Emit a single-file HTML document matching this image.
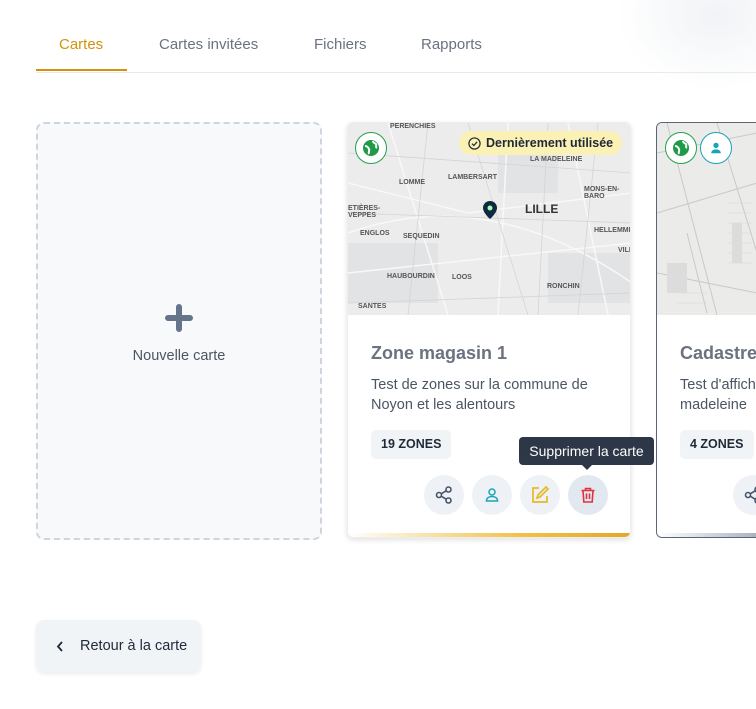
<!DOCTYPE html>
<html><head><meta charset="utf-8">
<style>
*{box-sizing:border-box;margin:0;padding:0}
html,body{width:756px;height:709px;overflow:hidden}
body{background:#fff;font-family:"Liberation Sans",sans-serif;position:relative}
.bg{position:absolute;right:-60px;top:-60px;width:200px;height:150px;background:radial-gradient(ellipse at center,#f1f3f6 0%,rgba(255,255,255,0) 70%)}
.tabs{position:absolute;left:36px;top:0;width:720px;height:73px;border-bottom:1px solid #e8eaee}
.tab{position:absolute;top:36px;font-size:15px;color:#6b7280}
.ul{position:absolute;left:0;top:69px;width:91px;height:2px;background:#d4920c}
.new{position:absolute;left:36px;top:122px;width:286px;height:418px;border:2px dashed #cfd5de;border-radius:8px;background:#f8f9fb}
.new .t{position:absolute;left:0;right:0;top:224px;text-align:center;font-size:14.5px;color:#4b5563}
.card{position:absolute;top:122px;height:416px;border-radius:6px;background:#fff;overflow:hidden}
.c1{left:347px;width:284px;box-shadow:0 2px 6px rgba(0,0,0,.12);border:1px solid #eee}
.c1:after{content:"";position:absolute;left:0;right:0;bottom:0;height:4px;background:linear-gradient(90deg,#fff,#f1c24a 60%,#e2a82a)}
.c2{left:656px;width:100px;border:1px solid #5b6475;border-right:0;border-radius:6px 0 0 6px}
.c2:after{content:"";position:absolute;left:0;right:0;bottom:0;height:4px;background:linear-gradient(90deg,#fff,#aab3c2)}
.map{position:absolute;left:0;top:0;right:0;height:192px;background:#ececec}
.title{position:absolute;left:23px;top:220px;font-size:18px;font-weight:bold;color:#6b7280}
.desc{position:absolute;left:23px;top:252px;width:245px;font-size:14.5px;line-height:20px;color:#4b5563;white-space:nowrap}
.badge{position:absolute;left:23px;top:307px;padding:0 10px;height:29px;line-height:29px;border-radius:5px;background:#f1f4f7;font-size:12.5px;font-weight:bold;color:#1f2937}
.btn{position:absolute;top:352px;width:40px;height:40px;border-radius:50%;background:#eef2f6;display:flex;align-items:center;justify-content:center}
.ic{position:absolute;top:9px;width:32px;height:32px;border-radius:50%;background:#fff;display:flex;align-items:center;justify-content:center}
.lbl{position:absolute;font-size:7px;color:#555;font-weight:bold}
.tip{position:absolute;left:519px;top:437px;width:135px;height:28px;background:#2d3748;color:#fff;font-size:14px;line-height:28px;text-align:center;border-radius:4px}
.tip:after{content:"";position:absolute;left:63px;bottom:-5px;border:5px solid transparent;border-bottom:0;border-top-color:#2d3748}
.back{position:absolute;left:36px;top:620px;width:165px;height:52px;border-radius:8px;background:#f1f4f7;box-shadow:0 2px 4px rgba(0,0,0,.08);font-size:14.5px;color:#1f2937}
</style></head><body>
<div class="bg"></div>
<div class="tabs">
<div class="tab" style="left:23px;color:#d4920c">Cartes</div>
<div class="tab" style="left:123px">Cartes invitées</div>
<div class="tab" style="left:278px">Fichiers</div>
<div class="tab" style="left:385px">Rapports</div>
<div class="ul"></div>
</div>
<div class="new">
<svg style="position:absolute;left:127px;top:180px" width="28" height="28" viewBox="0 0 28 28"><path d="M14 3v22M3 14h22" stroke="#64748b" stroke-width="6" stroke-linecap="round"/></svg>
<div class="t">Nouvelle carte</div>
</div>

<div class="card c1">
<div class="map">
<svg width="284" height="192" style="position:absolute;left:0;top:0">
<g fill="#e2e3e4"><rect x="0" y="120" width="90" height="60"/><rect x="150" y="20" width="60" height="50"/><rect x="200" y="130" width="84" height="50"/></g>
<g stroke="#f8f8f8" stroke-width="1.5" fill="none"><path d="M0 60 L120 90 L284 70"/><path d="M40 0 L100 192"/><path d="M160 0 L150 192"/><path d="M0 150 L284 120"/><path d="M220 0 L260 192"/><path d="M0 110 Q140 60 284 160"/></g>
<g stroke="#d2d4d6" stroke-width="0.8" fill="none"><path d="M0 30 L284 50"/><path d="M80 0 L60 192"/><path d="M200 0 L190 192"/><path d="M0 180 L284 170"/><path d="M120 0 L180 192"/><path d="M0 90 L284 100"/><path d="M250 0 L230 192"/></g>
<path d="M142 78a7 7 0 0 1 7 7c0 5-7 11-7 11s-7-6-7-11a7 7 0 0 1 7-7z" fill="#0f2a3d"/><circle cx="142" cy="85" r="2.5" fill="#9fb"/>
</svg>
<span class="lbl" style="left:42px;top:0">PERENCHIES</span>
<span class="lbl" style="left:182px;top:33px">LA MADELEINE</span>
<span class="lbl" style="left:51px;top:56px">LOMME</span>
<span class="lbl" style="left:100px;top:51px">LAMBERSART</span>
<span class="lbl" style="left:236px;top:63px">MONS-EN-BARO</span>
<span class="lbl" style="left:177px;top:79px;font-size:12px;color:#333">LILLE</span>
<span class="lbl" style="left:0;top:82px">ETIÈRES-<br>VEPPES</span>
<span class="lbl" style="left:12px;top:107px">ENGLOS</span>
<span class="lbl" style="left:55px;top:110px">SEQUEDIN</span>
<span class="lbl" style="left:246px;top:104px">HELLEMMES</span>
<span class="lbl" style="left:270px;top:124px">VILL</span>
<span class="lbl" style="left:39px;top:150px">HAUBOURDIN</span>
<span class="lbl" style="left:104px;top:151px">LOOS</span>
<span class="lbl" style="left:199px;top:160px">RONCHIN</span>
<span class="lbl" style="left:10px;top:180px">SANTES</span>
</div>
<div class="ic" style="left:7px;border:1.5px solid #22a04b"><svg width="20" height="20" viewBox="0 0 20 20"><circle cx="10" cy="10" r="8" fill="#1f9a46"/><path d="M4 8c2 0 3 1 4 3s-1 3 0 5M12 3c0 2 2 2 3 3s-1 3 1 4" stroke="#fff" stroke-width="2" fill="none"/></svg></div>
<div style="position:absolute;left:111px;top:8px;height:24px;padding:0 9px;background:#fbf1b5;border-radius:12px;font-size:12.5px;font-weight:bold;color:#1f2937;line-height:24px;display:flex;align-items:center;gap:5px"><svg width="13" height="13" viewBox="0 0 14 14"><circle cx="7" cy="7" r="6" stroke="#1f2937" stroke-width="1.3" fill="none"/><path d="M4.3 7.2l2 2 3.5-4" stroke="#1f2937" stroke-width="1.3" fill="none"/></svg>Dernièrement utilisée</div>
<div class="title">Zone magasin 1</div>
<div class="desc">Test de zones sur la commune de<br>Noyon et les alentours</div>
<div class="badge">19 ZONES</div>
<div class="btn" style="left:76px"><svg width="20" height="20" viewBox="0 0 20 20" fill="none" stroke="#475569" stroke-width="1.6"><circle cx="14.5" cy="4.5" r="2.5"/><circle cx="5" cy="10" r="2.5"/><circle cx="14.5" cy="15.5" r="2.5"/><path d="M7.2 8.8l5-3M7.2 11.2l5 3"/></svg></div>
<div class="btn" style="left:124px"><svg width="16" height="16" viewBox="0 0 16 16" fill="none" stroke="#1aa3b8" stroke-width="1.5"><circle cx="8" cy="5" r="3"/><path d="M2.5 14c0-3 2.5-4.5 5.5-4.5s5.5 1.5 5.5 4.5z"/></svg></div>
<div class="btn" style="left:172px"><svg width="20" height="20" viewBox="0 0 20 20" fill="none" stroke="#e8b923" stroke-width="1.7"><path d="M9 3H3v14h14v-6"/><path d="M16 2l2 2-8 8-3 1 1-3z"/></svg></div>
<div class="btn" style="left:220px;background:#e2e8f0"><svg width="18" height="18" viewBox="0 0 18 18" fill="none" stroke="#e0323f" stroke-width="1.6"><path d="M2.5 4.5h13M6.5 4.5V2.5h5v2M4 4.5l.8 11.5h8.4L14 4.5M7.5 7.5v5.5M10.5 7.5v5.5"/></svg></div>
</div>

<div class="card c2">
<div class="map" style="background:#ebebea">
<svg width="100" height="192"><g stroke="#c9c9c9" stroke-width="1" fill="none"><path d="M0 30 L100 10M0 90 L100 60M10 0 L60 192M60 0 L100 130M0 150 L100 170M30 110 L50 190"/></g><g stroke="#d8d8d8" stroke-width="0.6"><path d="M70 80 h25M70 90 h25M70 100 h25M70 110 h25M70 120 h25M70 130 h25M70 140 h25M20 170 h30M20 180 h30"/></g><g fill="#dcdcdc"><rect x="75" y="100" width="10" height="40"/><rect x="10" y="140" width="20" height="30"/></g></svg>
</div>
<div class="ic" style="left:8px;border:1.5px solid #22a04b"><svg width="20" height="20" viewBox="0 0 20 20"><circle cx="10" cy="10" r="8" fill="#1f9a46"/><path d="M4 8c2 0 3 1 4 3s-1 3 0 5M12 3c0 2 2 2 3 3s-1 3 1 4" stroke="#fff" stroke-width="2" fill="none"/></svg></div>
<div class="ic" style="left:43px;border:1.5px solid #1aa3b8"><svg width="14" height="14" viewBox="0 0 16 16" fill="#1aa3b8"><circle cx="8" cy="5" r="3"/><path d="M2.5 14c0-3 2.5-4.5 5.5-4.5s5.5 1.5 5.5 4.5z"/></svg></div>
<div class="title" style="color:#6b7280">Cadastre</div>
<div class="desc">Test d'affichage<br>madeleine</div>
<div class="badge">4 ZONES</div>
<div class="btn" style="left:76px"><svg width="20" height="20" viewBox="0 0 20 20" fill="none" stroke="#475569" stroke-width="1.6"><circle cx="14.5" cy="4.5" r="2.5"/><circle cx="5" cy="10" r="2.5"/><circle cx="14.5" cy="15.5" r="2.5"/><path d="M7.2 8.8l5-3M7.2 11.2l5 3"/></svg></div>
</div>

<div class="tip">Supprimer la carte</div>

<div class="back"><svg style="position:absolute;left:20px;top:21px" width="8" height="11" viewBox="0 0 8 11"><path d="M6 1L2 5.5 6 10" stroke="#1f2937" stroke-width="1.8" fill="none"/></svg><span style="position:absolute;left:44px;top:18px">Retour à la carte</span></div>
</body></html>
